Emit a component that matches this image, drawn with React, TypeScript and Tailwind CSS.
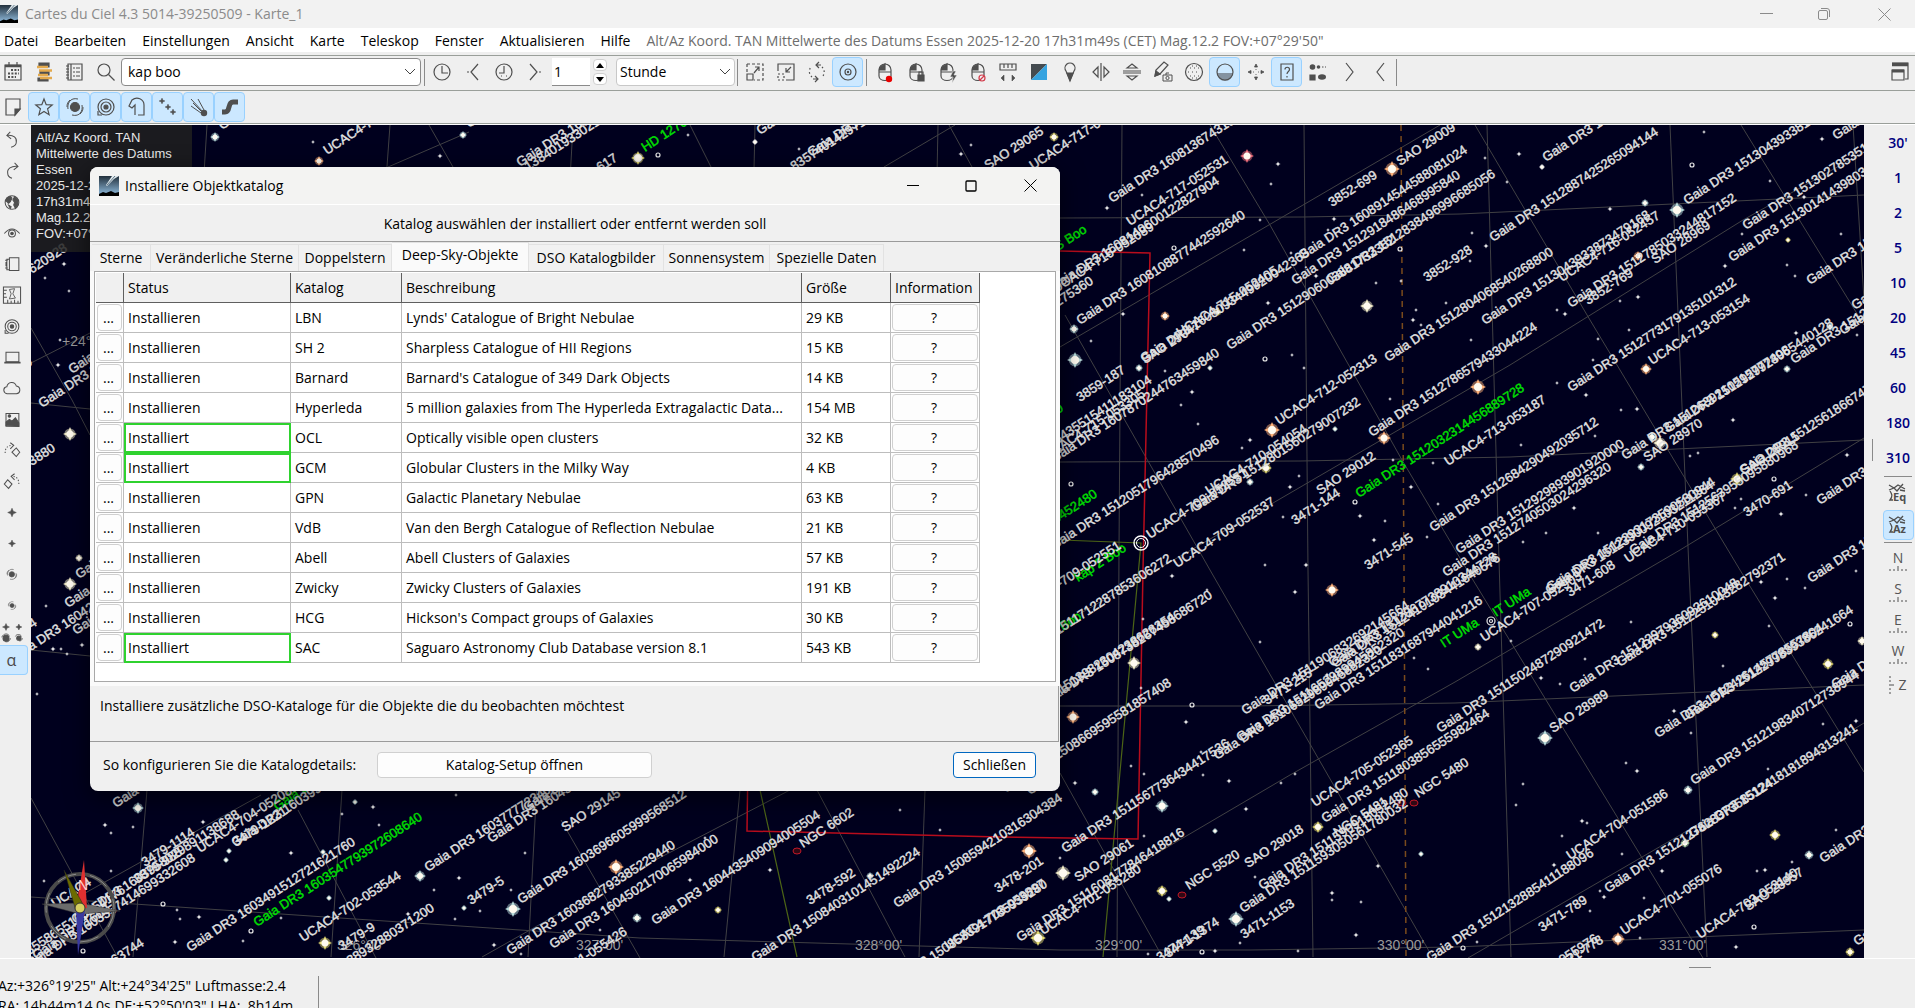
import type { ReactNode } from 'react';
import clsx from 'clsx';

type Point = [number, number];
type Label = [number, number, string];
type Star = [number, number, number, string];

const menus = ['Datei', 'Bearbeiten', 'Einstellungen', 'Ansicht', 'Karte', 'Teleskop', 'Fenster', 'Aktualisieren', 'Hilfe'];

const ink = '#4f4f4f';

function Icon({ children, size = 28 }: { children: ReactNode; size?: number }) {
    return (
        <svg width={size} height={size} viewBox="0 0 28 28" fill="none" stroke={ink} strokeWidth="1.2" aria-hidden="true">
            {children}
        </svg>
    );
}

const calendar = (
    <>
        <path d="M6 7h16v15H6z" />
        <path d="M6 8h16" strokeWidth="2.500" />
        <path d="M10 4v3M18 4v3" />
        <path d="M12 12h8M9 15.500h11M9 19h8" strokeWidth="2" strokeDasharray="2 1.400" />
    </>
);
const books = (
    <>
        <path d="M9 5h10v4H9zM10 13h9v4h-9zM8 20h10v3H8z" fill={ink} />
        <path d="M7 9h11M9 12.500h13M8 17h10M10 20h12" stroke="#e3a94c" strokeWidth="2.600" />
    </>
);
const listBook = (
    <>
        <path d="M7 6h14v16H7zM10 6v16" />
        <path d="M5 8h3M5 11h3M5 14h3M5 17h3M5 20h3M12 10h2M12 14h2M12 18h2M15 10h4M15 14h4M15 18h4" />
    </>
);
const magnifier = (
    <>
        <circle cx="12" cy="12" r="6" />
        <path d="M16.500 16.500l6 6" />
    </>
);
const clock = (
    <>
        <circle cx="14" cy="14" r="8" />
        <path d="M14 8v7h6" />
    </>
);
const clockBack = (
    <>
        <circle cx="14" cy="14" r="8" />
        <path d="M14 8v7H9M11 18h1M16 18h1" />
    </>
);
const stepBack = <path d="M19 6l-7 8 7 8M8 14h2" />;
const stepForward = <path d="M9 6l7 8-7 8M18 14h2" />;
const chevronRight = <path d="M11 5l7 9-7 9" />;
const chevronLeft = <path d="M18 5l-7 9 7 9" />;
const zoomOut = (
    <>
        <path d="M6 6h16v16h-9M6 6v8" strokeDasharray="3 2" />
        <path d="M6 16h6v6H6zM13 15l5-6M14 9h4v4" />
    </>
);
const zoomIn = (
    <>
        <path d="M6 13V6h16v16h-8" />
        <path d="M6 16h6v6H6z" strokeDasharray="2 2" />
        <path d="M19 9l-5 5M14 10v4h4" />
    </>
);
const rotateView = (
    <>
        <path d="M19 9a7 7 0 0 1 1 9M9 19a7 7 0 0 1-1-10" strokeDasharray="1.5 2.5" />
        <path d="M16 4l-3 3 3 3M12 18l3 3-3 3M13 7h5M10 21h5" />
    </>
);
const target = (
    <>
        <circle cx="14" cy="14" r="8" />
        <circle cx="14" cy="14" r="3" />
        <circle cx="14" cy="14" r=".6" />
    </>
);
const mouse = (
    <>
        <path d="M21 14v-2a6 6 0 0 0-12 0v6c0 6 12 6 12 0v-4H9" />
        <path d="M9.500 12V10l5.500-4v6z" fill={ink} />
    </>
);
const mouseDot = (<>{mouse}<circle cx="19" cy="21" r="3.2" fill="#e80000" stroke="none" /></>);
const mouseLock = (<>{mouse}<path d="M17 17h6v6h-6z" fill={ink} /><path d="M18 17v-3h4v3" /></>);
const mouseBolt = (<>{mouse}<path d="M21 13l-3 6h3l-1 6 5-8h-3l2-4z" fill={ink} stroke="#efefef" strokeWidth=".6" /></>);
const mouseOff = (<>{mouse}<circle cx="19" cy="20" r="3" stroke="#d23b4b" fill="#efefef" /><path d="M17 22l4-4" stroke="#d23b4b" /></>);
const ruler = (
    <>
        <path d="M6 6h16v6H6zM10 6v4M14 6v4M18 6v4" />
        <path d="M10 17l-3 3 3 3zM18 17l3 3-3 3z" fill={ink} strokeWidth=".6" />
    </>
);
const contrast = (
    <>
        <path d="M6 6h16L6 22z" fill="#444b50" stroke="none" />
        <path d="M22 6v16H6z" fill="#35a3e0" stroke="none" />
    </>
);
const pin = (
    <>
        <path d="M14 23l-4-10a5 5 0 1 1 8 0z" />
        <path d="M14 22l-3-7h6z" fill={ink} />
    </>
);
const flipH = <path d="M14 5v18M11 9l-5 5 5 5zM17 9l5 5-5 5z" />;
const flipV = <path d="M5 13h18M5 15h18M9 10l5-4 5 4zM9 18l5 4 5-4z" />;
const pencilCamera = (
    <>
        <path d="M6 18l1-6 8-8 4 3-8 9z" />
        <path d="M6 18l1-5 4 3z" fill={ink} />
        <path d="M14 17h9v6h-9zM17 17v-2h3" strokeWidth="1" />
        <circle cx="18.500" cy="20" r="1.600" strokeWidth="1" />
    </>
);
const dotted = (
    <>
        <circle cx="14" cy="14" r="8.5" />
        <path d="M10 10h9M8 14h12M10 18h9M12 8h5M12 20h5" strokeWidth="1" strokeDasharray="1 3" />
    </>
);
const horizon = (
    <>
        <path d="M6 15a8 8 0 0 0 16 0z" fill="#8492a0" stroke="none" />
        <circle cx="14" cy="14" r="8" />
    </>
);
const move = <path d="M14 6l1.500 3h-3zM14 22l1.500-3h-3zM6 14l3-1.500v3zM22 14l-3-1.500v3zM14 11v1M14 16v1M11 14h1M16 14h1" fill={ink} strokeWidth=".8" />;
const help = (
    <>
        <path d="M8 6h12v16H8z" />
        <path d="M12 11.500c0-3 4.500-3 4.500 0 0 2-2.500 2-2.500 4.500M14 18v1.500" />
    </>
);
const legend = (
    <>
        <circle cx="8.500" cy="9" r="2.800" fill={ink} stroke="none" />
        <circle cx="14.500" cy="9" r="1.800" fill={ink} stroke="none" />
        <path d="M18 9h1.500M21 9h1" />
        <path d="M6 17h5v5H6z" fill={ink} />
        <ellipse cx="18" cy="19" rx="4" ry="2.800" fill={ink} stroke="none" />
    </>
);
const windows = (
    <>
        <path d="M6 5h16v16h-3" />
        <path d="M6 6.500h16" strokeWidth="3.500" />
        <path d="M6 12h12v10H6z" />
        <path d="M6 13h12" strokeWidth="3" />
    </>
);
const note = (
    <>
        <path d="M7 6h14v10l-5 6H7z" />
        <path d="M16 22v-6h5z" fill={ink} />
    </>
);
const starIcon = <path d="M14 6l2.200 5.600 6 .4-4.600 3.800 1.500 5.900-5.100-3.200L8.900 21.700l1.500-5.900L5.800 12l6-.4z" />;
const galaxy = (
    <>
        <circle cx="14" cy="14" r="4.500" fill={ink} />
        <path d="M17 6C9 4 6 11 7 16M11 22c8 2 11-4 10-10M9 7c-3 3-3 5-3 7M19 21c3-3 3-5 3-7" strokeWidth="1" />
    </>
);
const rings = (
    <>
        <circle cx="14" cy="14" r="8" />
        <circle cx="14" cy="14" r="5" />
        <circle cx="14" cy="14" r="2" fill={ink} />
        <path d="M6 18v4h4" />
    </>
);
const nebula = <path d="M12 22V12l-3 3-3-2 3-6c5-4 12-1 12 5v10h-6" />;
const spark = (x: number, y: number, r: number) => (
    <path
        d={`M${x} ${y - r}l${r * 0.3} ${r * 0.7} ${r * 0.7} ${r * 0.3} ${-r * 0.7} ${r * 0.3} ${-r * 0.3} ${r * 0.7} ${-r * 0.3} ${-r * 0.7} ${-r * 0.7} ${-r * 0.3} ${r * 0.7} ${-r * 0.3}z`}
        fill={ink}
        strokeWidth=".6"
    />
);
const cluster = (<>{spark(8, 8, 2.8)}{spark(14, 14, 2.8)}{spark(19, 19, 2.8)}</>);
const comet = (
    <>
        <path d="M6 6l13 14M6 13l10 7M13 6l6 11M8 10l8 8" strokeWidth="1" />
        <circle cx="19" cy="20" r="3.200" fill={ink} stroke="none" />
    </>
);
const milkyWay = <path d="M6 19h3c6 0 2-10 8-10h5" strokeWidth="5" />;
const undo = <path d="M12 4L8 8l5 4M8 8c8-1 12 3 11 8 0 3-3 5-6 6" />;
const redo = <path d="M17 4l4 4-5 4M21 8C13 7 8 11 9 16c0 3 2 5 5 6" />;
const globe = (
    <>
        <circle cx="14" cy="14" r="8" />
        <path d="M8 9l4-2 2 2-2 4-2 2-3-3zM17 7l4 4v6l-3 4-2-4 1-3-2-3zM10 17l3 2-1 2z" fill={ink} />
    </>
);
const eye = (
    <>
        <path d="M5 14c6-7 12-7 18 0" />
        <circle cx="14" cy="14" r="4" />
        <circle cx="14" cy="14" r="1.500" fill={ink} />
    </>
);
const notebook = <path d="M11 6h11v15H11zM11 8H8v12h3M6 9h3M6 18h3M7 11v5" />;
const frame = (
    <>
        <path d="M4 4h20v19H4z" />
        <path d="M4 8h4M4 12h3M4 16h4M9 23v-4M13 23v-3M17 23v-4M21 23v-3" />
        <path d="M11 7l6-1-2 6 3 5-7 1 2-6z" strokeWidth="1" />
    </>
);
const laptop = (
    <>
        <path d="M7 8h15v11H7z" />
        <path d="M5 20h19" strokeWidth="2" />
    </>
);
const cloud = <path d="M9 20a4 4 0 0 1-1-8c1-6 9-7 11-1 6 1 5 9 0 9z" />;
const picture = (
    <>
        <path d="M7 7h15v15H7z" />
        <path d="M7 21v-4l4-3 3 2 4-4 4 6v4z" fill={ink} />
        <circle cx="11" cy="10" r="1.500" fill={ink} />
    </>
);
const rotateRight = (
    <>
        <path d="M14 16l5-5 4 5-4 5z" />
        <path d="M6 17c0-6 3-9 8-9" strokeDasharray="1.500 2" />
        <path d="M12 5l4 3-4 4" />
    </>
);
const rotateLeft = (
    <>
        <path d="M5 17l4-5 5 5-4 5z" />
        <path d="M22 17c0-6-3-9-7-9" strokeDasharray="1.500 2" />
        <path d="M17 5l-4 3 4 4" />
    </>
);
const smallGalaxy = (
    <g transform="translate(4 4) scale(.7)">{galaxy}</g>
);
const tinyGalaxy = (
    <g transform="translate(6.500 6.500) scale(.54)">{galaxy}</g>
);
const fewerMore = (
    <>
        {spark(7, 7, 4)}
        {spark(22, 7, 3.5)}
        <circle cx="7" cy="20" r="3.500" fill={ink} />
        <circle cx="22" cy="20" r="2.500" fill={ink} />
        <path d="M2 19c2-5 8-5 9-1M18 18c1-3 6-3 7 0M12 20c0 3-3 5-6 4M26 20c0 2-2 4-4 3" strokeWidth="1" />
    </>
);

type Tool = { label: string; icon: ReactNode; on?: boolean };

const mapTools: Tool[] = [
    { label: 'Maus Punkt', icon: mouseDot },
    { label: 'Maus sperren', icon: mouseLock },
    { label: 'Maus Blitz', icon: mouseBolt },
    { label: 'Maus aus', icon: mouseOff },
    { label: 'Abstand messen', icon: ruler },
    { label: 'Farben', icon: contrast },
    { label: 'Beschriftung', icon: pin },
    { label: 'Horizontal spiegeln', icon: flipH },
    { label: 'Vertikal spiegeln', icon: flipV },
    { label: 'Bild bearbeiten', icon: pencilCamera },
    { label: 'Gitter', icon: dotted },
    { label: 'Horizont', icon: horizon, on: true },
    { label: 'Verschieben', icon: move },
    { label: 'Hilfe', icon: help, on: true },
    { label: 'Legende', icon: legend },
    { label: 'Weiter', icon: chevronRight },
    { label: 'Zurück', icon: chevronLeft },
];

const objectTools: Tool[] = [
    { label: 'Sterne', icon: starIcon },
    { label: 'Nebel', icon: galaxy },
    { label: 'Planeten', icon: rings },
    { label: 'Dunkelnebel', icon: nebula },
    { label: 'Asteroiden', icon: cluster },
    { label: 'Kometen', icon: comet },
    { label: 'Milchstraße', icon: milkyWay },
];

const sideTools: Tool[] = [
    { label: 'Rückgängig', icon: undo },
    { label: 'Wiederholen', icon: redo },
    { label: 'Beobachtungsort', icon: globe },
    { label: 'Sichtfeld', icon: eye },
    { label: 'Katalog', icon: notebook },
    { label: 'Kartenrahmen', icon: frame },
    { label: 'Sonnensystem', icon: rings },
    { label: 'Anzeige', icon: laptop },
    { label: 'Wolken', icon: cloud },
    { label: 'Bilder', icon: picture },
    { label: 'Rechts drehen', icon: rotateRight },
    { label: 'Links drehen', icon: rotateLeft },
    { label: 'Mehr Sterne', icon: spark(14, 14, 5) },
    { label: 'Weniger Sterne', icon: spark(14, 14, 4) },
    { label: 'Mehr Nebel', icon: smallGalaxy },
    { label: 'Weniger Nebel', icon: tinyGalaxy },
];

function ToolButton({ label, icon, on }: Tool) {
    return (
        <button
            type="button"
            aria-label={label}
            className={clsx(
                'flex h-[30px] w-[31px] shrink-0 items-center justify-center rounded-sm border',
                on ? 'border-[#99d1ff] bg-[#cce8ff]' : 'border-transparent',
            )}
        >
            <Icon>{icon}</Icon>
        </button>
    );
}

function Separator() {
    return <div className="mx-px h-[27px] w-px shrink-0 bg-[#8a8a8a]" />;
}

function AppLogo({ className }: { className: string }) {
    return (
        <svg className={className} viewBox="0 0 20 20" aria-hidden="true">
            <defs>
                <linearGradient id="dusk" x1="0" y1="0" x2="0" y2="1">
                    <stop offset="0" stopColor="#22303c" />
                    <stop offset=".8" stopColor="#7fa6c4" />
                </linearGradient>
            </defs>
            <rect width="20" height="20" fill="url(#dusk)" />
            <path d="M7 9l6-9h7l-5 3-7 7z" fill="#dfe8ec" />
            <path d="M8 9l8-9" stroke="#5f7686" />
            <path d="M0 18l4-2 3 1 5-2 4 2 4-1v4H0z" fill="#000" />
        </svg>
    );
}

function Chevron({ className }: { className?: string }) {
    return (
        <svg className={className} width="12" height="12" viewBox="0 0 12 12" fill="none" stroke="#444" aria-hidden="true">
            <path d="M1 3l5 5 5-5" />
        </svg>
    );
}

/* Star chart: all points are in window pixels, shifted to the chart's corner when drawn */

const grid: Point[][] = [
    [[207, 125], [190, 400], [147, 790], [133, 957]],
    [[390, 125], [342, 790], [331, 957]],
    [[573, 125], [535, 820], [528, 957]],
    [[755, 125], [740, 790], [724, 957]],
    [[938, 125], [925, 790], [919, 957]],
    [[1122, 125], [1119, 550], [1117, 957]],
    [[1304, 125], [1308, 570], [1313, 957]],
    [[1487, 125], [1499, 560], [1511, 957]],
    [[1670, 125], [1689, 570], [1707, 957]],
    [[1853, 125], [1864, 300]],
    [[1060, 218], [1304, 217], [1460, 214], [1864, 195]],
    [[1060, 462], [1300, 461], [1510, 457], [1864, 440]],
    [[1060, 706], [1250, 706], [1455, 703], [1864, 685]],
    [[31, 897], [340, 918], [640, 938], [1060, 950], [1250, 950], [1455, 947], [1864, 930]],
    [[31, 403], [90, 409]],
    [[31, 650], [90, 656]],
    [[31, 363], [90, 333]],
    [[1060, 347], [1440, 125]],
    [[1060, 625], [1273, 503], [1510, 365], [1743, 220], [1864, 152]],
    [[1103, 885], [1290, 775], [1455, 682], [1680, 550], [1864, 438]],
    [[1468, 958], [1680, 835], [1864, 723]],
    [[388, 167], [469, 132]],
    [[884, 167], [955, 125]],
    [[78, 897], [261, 795]],
    [[482, 957], [640, 868], [790, 790]],
    [[1210, 125], [1270, 225], [1402, 460], [1473, 580], [1703, 958]],
    [[1475, 125], [1590, 320], [1740, 570], [1864, 772]],
    [[1741, 125], [1864, 325]],
    [[1065, 315], [1210, 570], [1433, 958]],
    [[1060, 773], [1163, 958]],
    [[429, 125], [453, 167]],
    [[690, 125], [711, 167]],
    [[949, 125], [972, 167]],
    [[31, 798], [118, 958]],
    [[298, 810], [376, 958]],
    [[561, 820], [640, 958]],
    [[31, 328], [72, 400], [90, 435]],
    [[817, 790], [905, 957]],
];

const labels: Label[] = [
    [1112, 203, 'Gaia DR3 1608136743107461248'],
    [1130, 226, 'UCAC4-717-052531'],
    [1054, 291, 'Gaia DR3 1608140600122827904'],
    [1056, 293, 'UCAC4-716-052089'],
    [1080, 325, 'Gaia DR3 1608108877442592640'],
    [1180, 337, 'UCAC4-715-052405'],
    [1144, 363, 'Gaia DR3 1608093449920042368'],
    [1145, 364, 'SAO 29047'],
    [1302, 260, 'Gaia DR3 1608914544588081024'],
    [1295, 285, 'Gaia DR3 1512918486468995840'],
    [1330, 284, 'Gaia DR3 1512838496996685056'],
    [1230, 350, 'Gaia DR3 1512906003881732352'],
    [1332, 207, '3852-699'],
    [1400, 166, 'SAO 29009'],
    [1427, 282, '3852-928'],
    [1388, 362, 'Gaia DR3 1512804068540268800'],
    [1372, 437, 'Gaia DR3 1512786579433044224'],
    [1448, 466, 'UCAC4-713-053187'],
    [1279, 425, 'UCAC4-712-052313'],
    [1080, 402, '3859-187'],
    [1054, 463, 'Gaia DR3 1607870244763459840'],
    [988, 489, 'Gaia DR3 1608435515411183104'],
    [1047, 460, 'UCAC4-715-053305'],
    [928, 391, 'Gaia DR3 1608243516541275360'],
    [1054, 550, 'Gaia DR3 1512051796428570496'],
    [1195, 512, 'Gaia DR3 1512801560279007232'],
    [1209, 495, 'UCAC4-710-054054'],
    [1150, 539, 'UCAC4-709-052551'],
    [1177, 568, 'UCAC4-709-052537'],
    [1320, 495, 'SAO 29012'],
    [1295, 525, '3471-144'],
    [1368, 570, '3471-545'],
    [1433, 532, 'Gaia DR3 1512684290492035712'],
    [1459, 554, 'Gaia DR3 1512929893901920000'],
    [1446, 577, 'Gaia DR3 1512740503024296320'],
    [1332, 667, 'Gaia DR3 1512867738910344728'],
    [1023, 612, 'UCAC4-709-052551'],
    [1007, 668, 'Gaia DR3 1511712287853606272'],
    [1006, 793, 'Gaia DR3 1508669595581857408'],
    [1047, 705, 'Gaia DR3 1508738267458686720'],
    [1010, 727, 'Gaia DR3 1513982304238626354'],
    [1065, 853, 'Gaia DR3 1511567736434417536'],
    [1217, 760, 'Gaia DR3 1510652989945852320'],
    [1240, 742, 'Gaia DR3 1511652989945852320'],
    [1245, 715, 'Gaia DR3 1511906832692145664'],
    [1267, 705, '3471-215'],
    [1318, 710, 'Gaia DR3 1511831687944041216'],
    [1335, 668, 'Gaia DR3 1512419103441640576'],
    [1315, 807, 'UCAC4-705-052365'],
    [1325, 823, 'Gaia DR3 1511803856555982464'],
    [1418, 798, 'NGC 5480'],
    [1337, 837, 'NGC 5481'],
    [1262, 890, 'Gaia DR3 1511590918052480'],
    [1243, 913, 'Gaia DR3 1511593050561780032'],
    [1248, 868, 'SAO 29018'],
    [1189, 890, 'NGC 5520'],
    [1244, 939, '3471-1153'],
    [1168, 958, '3471-1374'],
    [1160, 962, '3474-139'],
    [1078, 882, 'SAO 29061'],
    [1020, 942, 'Gaia DR3 1511608177846418816'],
    [1043, 935, 'UCAC4-701-055280'],
    [998, 893, '3478-201'],
    [897, 908, 'Gaia DR3 1508594210316304384'],
    [948, 950, 'UCAC4-703-053897'],
    [882, 994, 'Gaia DR3 1508583917785939280'],
    [1484, 642, 'UCAC4-707-052903'],
    [1570, 597, '3471-608'],
    [1549, 595, 'Gaia DR3 1512390092103211264'],
    [1440, 733, 'Gaia DR3 1511502487290921472'],
    [1573, 693, 'Gaia DR3 1512297936092610048'],
    [1620, 667, 'Gaia DR3 1512251043282792371'],
    [1553, 733, 'SAO 28989'],
    [1658, 738, 'Gaia DR3 1512426145778557804'],
    [1688, 720, 'Gaia DR3 1512299839386241664'],
    [1694, 785, 'Gaia DR3 1512198340712738944'],
    [1608, 893, 'Gaia DR3 1512127628373585124'],
    [1692, 838, 'Gaia DR3 1512418181894313241'],
    [1570, 860, 'UCAC4-704-051586'],
    [1430, 962, 'Gaia DR3 1512132885411188096'],
    [1542, 932, '3471-789'],
    [1624, 935, 'UCAC4-701-055076'],
    [1700, 939, 'UCAC4-703-053140'],
    [1748, 911, 'SAO 28957'],
    [1500, 1005, 'UCAC4-701-055976'],
    [1558, 972, '3471-778'],
    [1823, 863, 'Gaia DR3 15121'],
    [1857, 946, 'Gaia DR3'],
    [1811, 583, 'Gaia DR3 1512'],
    [1835, 689, 'Gaia DR3 1512'],
    [1546, 162, 'Gaia DR3 1512901638274'],
    [1493, 242, 'Gaia DR3 1512887425265094144'],
    [1687, 205, 'Gaia DR3 1513043933814267136'],
    [1746, 230, 'Gaia DR3 1513027853515120640'],
    [1732, 262, 'Gaia DR3 1513014143980317184'],
    [1810, 285, 'Gaia DR3 1512'],
    [1836, 140, 'Gaia DR3 1512'],
    [1855, 310, 'Gaia DR3'],
    [1820, 505, 'Gaia DR3 1512'],
    [1794, 364, 'Gaia DR3 151241'],
    [1843, 335, 'Gaia DR3 151'],
    [1562, 282, 'UCAC4-716-052457'],
    [1485, 325, 'Gaia DR3 1513043933873479168'],
    [1571, 308, 'Gaia DR3 1512785033244817152'],
    [1588, 305, '3852-769'],
    [1655, 264, 'SAO 28969'],
    [1571, 392, 'Gaia DR3 1512773179135101312'],
    [1652, 365, 'UCAC4-713-053154'],
    [1625, 460, 'Gaia DR3 1512639210515777408'],
    [1668, 433, 'Gaia DR3 1512929923965440128'],
    [1647, 462, 'SAO 28970'],
    [1743, 475, 'Gaia DR3 1512561866747'],
    [1744, 475, 'SAO 28915'],
    [1633, 555, 'Gaia DR3 1512563955095880968'],
    [1628, 563, 'UCAC4-710-053367'],
    [1550, 592, 'Gaia DR3 1512293173590530944'],
    [1747, 517, '3470-691'],
    [327, 155, 'UCAC4-717-052'],
    [222, 130, 'Gaia DR3'],
    [760, 135, 'Gaia DR3 16'],
    [811, 157, 'Gaia DR3 161429716'],
    [794, 171, '835740142971'],
    [988, 170, 'SAO 29065'],
    [1033, 170, 'UCAC4-717-052531'],
    [520, 167, 'Gaia DR3 16100'],
    [528, 171, '1384019330217'],
    [469, 128, 'Gaia'],
    [600, 172, '617'],
    [-98, 358, 'Gaia DR3 1604233958725620928'],
    [72, 374, 'Gaia DR3 160'],
    [42, 408, 'Gaia DR3 160'],
    [-133, 472, 'Gaia DR3 1604233958725620920'],
    [-110, 558, 'Gaia DR3 1604233958725653880'],
    [79, 579, 'Gaia'],
    [-70, 662, 'UCAC4-706-052517'],
    [68, 608, 'Gaia'],
    [-61, 689, 'UCAC4-706-054064'],
    [14, 662, 'Gaia DR3 16042'],
    [76, 635, 'Gaia'],
    [116, 808, 'Gaia DR3'],
    [190, 952, 'Gaia DR3 1603491512721621760'],
    [303, 942, 'UCAC4-702-053544'],
    [269, 1018, 'Gaia DR3 1603488932880371200'],
    [342, 951, '3479-9'],
    [471, 905, '3479-5'],
    [428, 872, 'Gaia DR3 1603777723401'],
    [491, 843, 'Gaia DR3 16045'],
    [527, 812, 'Gaia DR3'],
    [565, 832, 'SAO 29145'],
    [521, 904, 'Gaia DR3 1603696605999568512'],
    [510, 955, 'Gaia DR3 1603682793385229440'],
    [553, 949, 'Gaia DR3 1604502170065984000'],
    [529, 998, 'UCAC4-701-055426'],
    [145, 867, '3479-1114'],
    [200, 853, 'UCAC4-704-052089'],
    [235, 847, 'Gaia DR3 1603995402'],
    [236, 847, '3479-1221'],
    [75, 924, 'Gaia DR3 1603958029891138688'],
    [137, 884, '3879-988'],
    [30, 968, 'Gaia DR3 1603557414699332608'],
    [-40, 1000, 'Gaia DR3 1603558655160354176'],
    [36, 960, 'Gaia DR3 1603'],
    [-3, 1041, 'Gaia DR3 1603481920063744'],
    [55, 908, 'UCAC4'],
    [655, 925, 'Gaia DR3 1604435409094005504'],
    [810, 905, '3478-592'],
    [755, 962, 'Gaia DR3 1508403101451492224'],
    [803, 848, 'NGC 6602'],
    [1030, 795, 'Gaia'],
];

const greenLabels: Label[] = [
    [1359, 498, 'Gaia DR3 1512032314456889728'],
    [1078, 582, 'kap 2 Boo'],
    [1063, 631, 'Boo'],
    [1496, 617, 'IT UMa'],
    [1444, 648, 'IT UMa'],
    [1050, 256, 'CS Boo'],
    [932, 604, 'Gaia DR3 1512066183945452480'],
    [1052, 418, '20'],
    [645, 152, 'HD 12702'],
    [257, 927, 'Gaia DR3 1603547793972608640'],
    [277, 811, 'Gaia DR3'],
];

const axisLabels: Label[] = [
    [62, 346, '+24°'],
    [337, 950, "326°00'"],
    [576, 950, "327°00'"],
    [855, 950, "328°00'"],
    [1095, 950, "329°00'"],
    [1377, 950, "330°00'"],
    [1659, 950, "331°00'"],
];

const orange = '#ffb27a';
const teal = '#b9dcdc';
const cream = '#f2ecc8';
const yellow = '#e6dc74';

const stars: Star[] = [
    [1247, 156, 7, '#f0707c'], [1392, 169, 8, orange], [1367, 306, 7, cream], [1478, 387, 8, orange], [1384, 438, 7, orange],
    [1272, 430, 8, orange], [1266, 468, 6, yellow], [1165, 316, 5, orange], [1075, 360, 8, teal], [1074, 329, 5, teal],
    [1139, 368, 4, teal], [1250, 482, 4, teal], [1218, 312, 4, yellow], [1210, 368, 3, teal], [1335, 429, 3, teal],
    [1677, 210, 8, teal], [1645, 203, 4, teal], [1638, 256, 5, orange], [1646, 369, 6, orange], [1660, 443, 7, cream],
    [1652, 437, 5, teal], [1641, 467, 4, teal], [1737, 479, 7, yellow], [1787, 369, 4, teal], [1788, 240, 3, yellow],
    [1542, 167, 3, '#ffffff'], [1830, 327, 4, teal], [1332, 590, 7, orange], [1134, 663, 7, cream], [1073, 717, 7, orange],
    [1162, 806, 7, teal], [1095, 792, 4, teal], [1318, 827, 6, yellow], [1029, 851, 8, orange], [1063, 873, 8, cream],
    [1162, 891, 6, yellow], [1038, 938, 8, yellow], [1236, 919, 8, teal], [1169, 899, 3, teal], [1215, 831, 3, teal],
    [1545, 738, 8, teal], [1478, 647, 4, cream], [1715, 635, 4, yellow], [1828, 664, 6, yellow], [1688, 790, 5, teal],
    [1685, 843, 5, '#b8e0b0'], [1775, 835, 6, yellow], [1809, 855, 5, teal], [1618, 939, 7, orange], [1850, 952, 5, yellow],
    [1862, 641, 5, cream], [70, 434, 7, cream], [70, 584, 7, cream], [79, 558, 4, cream], [138, 808, 6, teal],
    [420, 876, 6, teal], [513, 909, 8, teal], [616, 867, 8, orange], [325, 943, 7, yellow], [637, 918, 5, teal],
    [229, 851, 3, teal], [226, 860, 3, teal], [323, 852, 3, teal], [329, 898, 3, teal], [464, 908, 3, teal],
    [215, 137, 5, teal], [319, 161, 5, orange], [463, 135, 4, teal], [638, 158, 7, yellow], [1054, 137, 5, yellow],
    [755, 142, 3, '#ffffff'], [355, 802, 3, teal], [1421, 854, 3, teal], [718, 910, 4, yellow], [870, 876, 4, teal],
];

const dots: Point[] = [
    [1278, 164], [1271, 184], [1142, 195], [1107, 208], [1260, 220], [1244, 250], [1334, 219], [1328, 230], [1291, 253], [1316, 276],
    [1376, 283], [1401, 281], [1268, 303], [1292, 355], [1304, 368], [1123, 314], [1091, 341], [1165, 371], [1192, 392], [1181, 405],
    [1198, 424], [1250, 440], [1242, 448], [1299, 476], [1290, 487], [1390, 399], [1393, 460], [1411, 487], [1433, 463], [1438, 504],
    [1360, 516], [1385, 521], [1283, 517], [1374, 540], [1427, 537], [1265, 565], [1306, 565], [1472, 233], [1470, 261], [1486, 246],
    [1446, 303], [1416, 310], [1413, 320], [1421, 325], [1471, 340], [1519, 154], [1485, 158], [1507, 182], [1610, 209], [1704, 132],
    [1770, 181], [1804, 197], [1841, 234], [1742, 234], [1725, 266], [1787, 265], [1795, 276], [1796, 333], [1857, 335], [1557, 310],
    [1565, 314], [1598, 339], [1629, 330], [1638, 297], [1620, 301], [1557, 383], [1586, 395], [1593, 360], [1621, 410], [1637, 409],
    [1521, 445], [1595, 436], [1733, 420], [1698, 453], [1690, 456], [1847, 455], [1741, 499], [1735, 508], [1781, 514], [1806, 495],
    [1598, 533], [1574, 508], [1523, 542], [1546, 533], [1295, 592], [1207, 590], [1260, 642], [1172, 576], [1143, 619],
    [1141, 688], [1186, 722], [1201, 752], [1203, 775], [1229, 781], [1281, 783], [1295, 774], [1246, 809], [1144, 774], [1131, 766],
    [1075, 783], [1144, 836], [1060, 858], [1332, 893], [1332, 900], [1361, 902], [1356, 935], [1240, 943], [1148, 954], [1215, 951],
    [1298, 951], [1255, 877], [1378, 866], [1414, 658], [1428, 669], [1327, 675], [1585, 659], [1560, 684], [1541, 678], [1511, 641],
    [1631, 622], [1761, 582], [1787, 579], [1805, 588], [1775, 598], [1769, 626], [1723, 666], [1674, 711], [1691, 733], [1823, 724],
    [1856, 721], [1768, 769], [1626, 763], [1637, 771], [1523, 784], [1516, 805], [1582, 821], [1587, 823], [1562, 836], [1554, 865],
    [1622, 854], [1600, 891], [1604, 897], [1590, 911], [1644, 898], [1662, 871], [1640, 938], [1757, 871], [1765, 870], [1792, 862],
    [1836, 830], [1736, 947], [1477, 942], [45, 278], [64, 264], [69, 291], [60, 340], [58, 365], [37, 694],
    [313, 142], [440, 156], [688, 135], [799, 149], [961, 154], [971, 145], [1074, 133], [105, 825], [111, 833], [133, 827],
    [203, 822], [111, 871], [44, 881], [291, 853], [379, 825], [342, 814], [373, 807], [456, 795], [434, 890], [459, 878],
    [511, 890], [525, 853], [408, 914], [455, 919], [480, 911], [199, 917], [180, 919], [177, 910], [175, 942], [243, 941],
    [281, 918], [494, 945], [521, 954], [560, 872], [690, 880], [705, 838], [600, 930], [770, 870], [940, 830], [900, 810],
    [53, 649], [61, 649], [67, 654], [82, 645], [46, 606], [1856, 571], [1822, 139],
];

const doubles: Point[] = [
    [1174, 248], [1265, 359], [1400, 249], [1692, 165], [1355, 502], [1071, 484], [1774, 479], [1192, 705], [1202, 952], [1850, 624],
    [1754, 927], [1463, 948], [163, 904], [251, 931], [83, 951], [658, 155],
];

const galaxies: Point[] = [[1182, 895], [1402, 803], [1414, 803], [797, 851]];

function toPath(points: Point[]) {
    return points.map(([x, y], i) => `${i ? 'L' : 'M'}${x} ${y}`).join('');
}

function starPath(x: number, y: number, r: number) {
    const k = r * 0.3;
    return `M${x} ${y - r}L${x + k} ${y - k}L${x + r} ${y}L${x + k} ${y + k}L${x} ${y + r}L${x - k} ${y + k}L${x - r} ${y}L${x - k} ${y - k}Z`;
}

function Labels({ items, fill }: { items: Label[]; fill: string }) {
    return (
        <g fill={fill} stroke={fill} strokeWidth=".4">
            {items.map(([x, y, text], i) => (
                <text key={i} transform={`translate(${x} ${y}) rotate(-33)`}>{text}</text>
            ))}
        </g>
    );
}

function Compass() {
    return (
        <g transform="translate(80 908)">
            <circle r="34" fill="none" stroke="#4a4a4a" strokeWidth="4" />
            <circle r="34" fill="none" stroke="#8c8c8c" strokeWidth="1" strokeDasharray="20 14" />
            <path d="M-38 -4L0 -5L40 3L0 6z" fill="#6c6c6c" stroke="#333" strokeWidth=".5" />
            <path d="M4 -48L7 0H-4z" fill="#e03030" />
            <path d="M-2 47L5 2H-4z" fill="#3a3aa0" />
            <path d="M-16 -38L4 -2L-4 3z" fill="#6b6b00" stroke="#222" strokeWidth=".5" />
            <circle r="5" fill="#d6cf60" stroke="#333" />
            <text x="-2" y="-18" fontSize="14" fill="#ffd0d0">N</text>
        </g>
    );
}

function StarChart() {
    return (
        <svg className="absolute inset-0 h-full w-full font-['Liberation_Sans',sans-serif] text-[13px]" role="img" aria-label="Sternkarte">
            <g transform="translate(-31 -125)">
                <g fill="none" stroke="#404044">
                    {grid.map((line, i) => (
                        <path key={i} d={toPath(line)} />
                    ))}
                </g>
                <path d="M1401 125L1404 570L1406 957" fill="none" stroke="#7a4a1c" strokeWidth="1.5" strokeDasharray="6 5" />
                <path d="M1000 537L1060 540L1141 543L1103 957M760 790L797 957" fill="none" stroke="#4c6416" strokeWidth="1.2" />
                <path d="M1000 250L1060 251L1150 253L1143 570L1138 839L1000 837L747 831L748 760" fill="none" stroke="#b80c1c" strokeWidth="1.5" />
                <g fill="#f4f4f4">
                    {dots.map(([x, y], i) => (
                        <path key={i} d={starPath(x, y, i % 3 ? 2 : 2.6)} />
                    ))}
                </g>
                {stars.map(([x, y, r, color], i) => (
                    <g key={i}>
                        <circle cx={x} cy={y} r={r * 0.8} fill={color} opacity=".5" />
                        <path d={starPath(x, y, r)} fill={color} />
                        <circle cx={x} cy={y} r={r * 0.5} fill="#fffaf0" />
                    </g>
                ))}
                <g fill="none" stroke="#e8e8e8" strokeWidth="1.2">
                    {doubles.map(([x, y], i) => (
                        <circle key={i} cx={x} cy={y} r="2" />
                    ))}
                    <circle cx="638" cy="158" r="3.5" />
                    <circle cx="1491" cy="621" r="4" />
                    <circle cx="1491" cy="621" r="1.5" />
                </g>
                <g fill="#300814" stroke="#c01828">
                    {galaxies.map(([x, y], i) => (
                        <ellipse key={i} cx={x} cy={y} rx="4" ry="3" />
                    ))}
                </g>
                <g fill="#9a9a9a" fontSize="14">
                    {axisLabels.map(([x, y, text]) => (
                        <text key={text} x={x} y={y}>{text}</text>
                    ))}
                </g>
                <Labels items={greenLabels} fill="#00e000" />
                <Labels items={labels} fill="#e2e2e2" />
                <circle cx="1141" cy="543" r="7" fill="none" stroke="#fff" strokeWidth="1.400" />
                <circle cx="1141" cy="543" r="4.500" fill="none" stroke="#fff" />
                <Compass />
            </g>
        </svg>
    );
}

const tabs = [
    { label: 'Sterne', width: 'w-[59px]' },
    { label: 'Veränderliche Sterne', width: 'w-[148px]' },
    { label: 'Doppelstern', width: 'w-[93px]' },
    { label: 'Deep-Sky-Objekte', width: 'w-[137px]' },
    { label: 'DSO Katalogbilder', width: 'w-[135px]' },
    { label: 'Sonnensystem', width: 'w-[106px]' },
    { label: 'Spezielle Daten', width: 'w-[114px]' },
];

const catalogs = [
    { name: 'LBN', text: "Lynds' Catalogue of Bright Nebulae", size: '29 KB' },
    { name: 'SH 2', text: 'Sharpless Catalogue of HII Regions', size: '15 KB' },
    { name: 'Barnard', text: "Barnard's Catalogue of 349 Dark Objects", size: '14 KB' },
    { name: 'Hyperleda', text: '5 million galaxies from The Hyperleda Extragalactic Data...', size: '154 MB' },
    { name: 'OCL', text: 'Optically visible open clusters', size: '32 KB', installed: true },
    { name: 'GCM', text: 'Globular Clusters in the Milky Way', size: '4 KB', installed: true },
    { name: 'GPN', text: 'Galactic Planetary Nebulae', size: '63 KB' },
    { name: 'VdB', text: 'Van den Bergh Catalogue of Reflection Nebulae', size: '21 KB' },
    { name: 'Abell', text: 'Abell Clusters of Galaxies', size: '57 KB' },
    { name: 'Zwicky', text: 'Zwicky Clusters of Galaxies', size: '191 KB' },
    { name: 'HCG', text: "Hickson's Compact groups of Galaxies", size: '30 KB' },
    { name: 'SAC', text: 'Saguaro Astronomy Club Database version 8.1', size: '543 KB', installed: true },
];

function CatalogTable() {
    const head = 'border-r border-b border-[#5f5f5f] bg-[#f0f0f0] px-1 text-left font-normal';
    const cell = 'border-r border-b border-[#bdbdbd] px-1 whitespace-nowrap';
    return (
        <table className="w-[884px] table-fixed border-separate border-spacing-0">
            <colgroup>
                <col className="w-7" />
                <col className="w-[167px]" />
                <col className="w-[111px]" />
                <col className="w-[400px]" />
                <col className="w-[89px]" />
                <col className="w-[89px]" />
            </colgroup>
            <thead>
                <tr className="h-[30px]">
                    <th className={head} aria-label="Details" />
                    <th className={head}>Status</th>
                    <th className={head}>Katalog</th>
                    <th className={head}>Beschreibung</th>
                    <th className={head}>Größe</th>
                    <th className={head}>Information</th>
                </tr>
            </thead>
            <tbody>
                {catalogs.map((row) => (
                    <tr key={row.name} className="h-[30px]">
                        <td className="border-r border-b border-[#bdbdbd] p-px">
                            <button type="button" className="block h-[27px] w-[25px] rounded border border-[#d0d0d0] bg-[#fdfdfd] pr-0.5 text-center">
                                ...
                            </button>
                        </td>
                        <td
                            className={clsx(
                                'whitespace-nowrap',
                                row.installed
                                    ? 'border-2 border-[#2fd22f] pl-0.5'
                                    : 'border-r border-b border-[#bdbdbd] px-1',
                            )}
                        >
                            {row.installed ? 'Installiert' : 'Installieren'}
                        </td>
                        <td className={cell}>{row.name}</td>
                        <td className={cell}>{row.text}</td>
                        <td className={cell}>{row.size}</td>
                        <td className="border-r border-b border-[#bdbdbd] p-px">
                            <button type="button" className="block h-[27px] w-[86px] rounded border border-[#d0d0d0] bg-[#fdfdfd] pr-0.5 text-center">
                                ?
                            </button>
                        </td>
                    </tr>
                ))}
            </tbody>
        </table>
    );
}

function CatalogDialog() {
    return (
        <section
            role="dialog"
            aria-label="Installiere Objektkatalog"
            className="absolute top-[42px] left-[59px] flex w-[970px] flex-col overflow-hidden rounded-lg bg-[#f0f0f0] shadow-[0_6px_24px_rgba(0,0,0,0.6)]"
        >
            <header className="flex h-[38px] items-center border-b border-white bg-[#f3f3f2] pl-[9px]">
                <AppLogo className="h-5 w-5" />
                <h2 className="ml-1.5 flex-1">Installiere Objektkatalog</h2>
                <button type="button" aria-label="Minimieren" className="flex h-9 w-[58px] items-center justify-center">
                    <svg width="12" height="12" viewBox="0 0 12 12" stroke="#000"><path d="M0 5.500h12" /></svg>
                </button>
                <button type="button" aria-label="Maximieren" className="flex h-9 w-[58px] items-center justify-center">
                    <svg width="12" height="12" viewBox="0 0 12 12" fill="none" stroke="#000" strokeWidth="1.300"><rect x="1" y="1" width="10" height="10" rx="1" /></svg>
                </button>
                <button type="button" aria-label="Schließen" className="flex h-9 w-[60px] items-center justify-center">
                    <svg width="13" height="13" viewBox="0 0 13 13" stroke="#000"><path d="M.5.5l12 12M12.500.5l-12 12" /></svg>
                </button>
            </header>

            <p className="flex h-[37px] items-center justify-center border-b border-[#9b9b9b] pt-px">
                Katalog auswählen der installiert oder entfernt werden soll
            </p>

            <div className="flex h-[29px] items-end px-0.5" role="tablist">
                {tabs.map((tab) => {
                    const active = tab.label === 'Deep-Sky-Objekte';
                    return (
                        <button
                            key={tab.label}
                            type="button"
                            role="tab"
                            aria-selected={active}
                            className={clsx(
                                'shrink-0 border-t border-r border-[#e2e2e2] text-center whitespace-nowrap',
                                active ? 'h-[29px] bg-[#fafafa] pb-1' : 'h-[27px] bg-[#f1f1f1]',
                                tab.width,
                            )}
                        >
                            {tab.label}
                        </button>
                    );
                })}
            </div>

            <div className="bg-[#fafafa] px-1 pb-1">
                <div className="h-[411px] border border-[#a8a8a8] bg-white p-px">
                    <CatalogTable />
                </div>
            </div>

            <p className="mr-px h-[56px] border-r border-b border-[#9b9b9b] pt-2.5 pl-2.5">
                Installiere zusätzliche DSO-Kataloge für die Objekte die du beobachten möchtest
            </p>

            <footer className="flex h-[49px] items-center pr-6 pb-1 pl-[13px]">
                <span className="w-[274px]">So konfigurieren Sie die Katalogdetails:</span>
                <button type="button" className="h-[26px] w-[275px] rounded border border-[#d0d0d0] bg-[#fdfdfd]">
                    Katalog-Setup öffnen
                </button>
                <button type="button" className="ml-auto h-[26px] w-[83px] rounded border border-[#0067c0] bg-[#fdfdfd]">
                    Schließen
                </button>
            </footer>
        </section>
    );
}

const fieldSizes = ["30'", '1', '2', '5', '10', '20', '45', '60', '180', '310'];

function GridButton({ text, on }: { text: string; on?: boolean }) {
    return (
        <button
            type="button"
            className={clsx(
                'flex h-[30px] w-[31px] items-center justify-center rounded-sm border',
                on ? 'border-[#99d1ff] bg-[#cce8ff]' : 'border-transparent',
            )}
        >
            <svg width="22" height="22" viewBox="0 0 22 22" fill="none" stroke={ink} strokeWidth="1.300" aria-hidden="true">
                <path d="M2 3l5 3 4-3 7 4M2 8l5-2 3 3 6-7M3 9c2 3 3 5 0 9h3M13 8l5 1" />
                <text x="6" y="19" fontSize="11" fontWeight="700" fill={ink} stroke="none">{text}</text>
            </svg>
        </button>
    );
}

function Bearing({ text }: { text: string }) {
    return (
        <button type="button" className="flex h-[31px] w-[31px] flex-col items-center justify-center text-[14px] leading-4 text-[#555]">
            {text}
            <svg width="20" height="5" viewBox="0 0 20 5" stroke={ink} aria-hidden="true">
                <path d="M2 3v2M6 3v2M10 0v5M14 3v2M18 3v2" />
            </svg>
        </button>
    );
}

export default function App() {
    return (
        <div className="flex h-screen flex-col overflow-hidden bg-[#efefef] font-['Open_Sans',sans-serif] text-[14px] leading-5 text-black">
            <header className="flex h-7 shrink-0 items-center bg-[#f2f2f2] text-[#8b8b8b]">
                <AppLogo className="h-5 w-[18px]" />
                <h1 className="ml-[7px] flex-1">Cartes du Ciel 4.3 5014-39250509 - Karte_1</h1>
                <button type="button" aria-label="Minimieren" className="flex h-7 w-[58px] items-center justify-center">
                    <svg width="13" height="12" viewBox="0 0 13 12" stroke="#8b8b8b"><path d="M0 5.500h13" /></svg>
                </button>
                <button type="button" aria-label="Verkleinern" className="flex h-7 w-[58px] items-center justify-center">
                    <svg width="12" height="12" viewBox="0 0 12 12" fill="none" stroke="#8b8b8b"><rect x=".5" y="2.500" width="9" height="9" rx="1.500" /><path d="M3 .5h6a2.500 2.500 0 0 1 2.500 2.500v6" /></svg>
                </button>
                <button type="button" aria-label="Beenden" className="flex h-7 w-[62px] items-center justify-center">
                    <svg width="13" height="13" viewBox="0 0 13 13" stroke="#8b8b8b"><path d="M.5.5l12 12M12.500.5l-12 12" /></svg>
                </button>
            </header>

            <nav className="flex h-6 shrink-0 items-center gap-4 bg-white px-1 pt-0.5" aria-label="Menü">
                {menus.map((menu) => (
                    <button key={menu} type="button">{menu}</button>
                ))}
                <span className="text-[#6d6d6d]">
                    Alt/Az Koord. TAN Mittelwerte des Datums Essen 2025-12-20 17h31m49s (CET) Mag.12.2 FOV:+07°29'50"
                </span>
            </nav>

            <div className="mt-[3px] flex h-[36px] shrink-0 items-center border-t border-b border-[#9a9f9a] pb-0.5">
                <div className="-ml-[3px] flex">
                    <ToolButton label="Kalender" icon={calendar} />
                    <ToolButton label="Kataloge" icon={books} />
                    <ToolButton label="Liste" icon={listBook} />
                    <ToolButton label="Suchen" icon={magnifier} />
                </div>
                <div className="mr-0.5 flex h-7 w-[300px] items-center rounded-sm border border-[#8a8a8a] bg-white pr-1">
                    <input aria-label="Suche" defaultValue="kap boo" className="min-w-0 flex-1 pl-1.5 outline-none" />
                    <button type="button" aria-label="Verlauf"><Chevron /></button>
                </div>
                <Separator />
                <ToolButton label="Jetzt" icon={clock} />
                <ToolButton label="Zeit zurück" icon={stepBack} />
                <ToolButton label="Zeit setzen" icon={clockBack} />
                <ToolButton label="Zeit vor" icon={stepForward} />
                <input aria-label="Schrittweite" defaultValue="1" className="ml-0.5 h-7 w-[38px] border-b border-[#8a8a8a] bg-white pl-0.5 outline-none" />
                <div className="mx-[3px] flex flex-col gap-0.5">
                    <button type="button" aria-label="Mehr" className="flex h-3 w-[14px] items-center justify-center rounded-sm border border-[#d0d0d0] bg-white">
                        <svg width="8" height="5" viewBox="0 0 8 5"><path d="M0 5l4-5 4 5z" /></svg>
                    </button>
                    <button type="button" aria-label="Weniger" className="flex h-3 w-[14px] items-center justify-center rounded-sm border border-[#d0d0d0] bg-white">
                        <svg width="8" height="5" viewBox="0 0 8 5"><path d="M0 0l4 5 4-5z" /></svg>
                    </button>
                </div>
                <div className="relative mr-px ml-1.5">
                    <select aria-label="Einheit" className="h-7 w-[119px] appearance-none rounded-sm border border-[#c8c8c8] bg-white pl-[3px]">
                        <option>Stunde</option>
                    </select>
                    <Chevron className="pointer-events-none absolute top-2 right-1" />
                </div>
                <Separator />
                <ToolButton label="Verkleinern" icon={zoomOut} />
                <ToolButton label="Vergrößern" icon={zoomIn} />
                <ToolButton label="Drehen" icon={rotateView} />
                <ToolButton label="Zentrieren" icon={target} on />
                <div className="w-0.5 shrink-0" />
                <Separator />
                {mapTools.map((tool) => (
                    <ToolButton key={tool.label} {...tool} />
                ))}
                <Separator />
                <div className="ml-auto">
                    <ToolButton label="Fenster" icon={windows} />
                </div>
            </div>

            <div className="flex h-[33px] shrink-0 items-center border-b border-[#9a9f9a]">
                <div className="-ml-[3px] flex">
                    <ToolButton label="Neue Karte" icon={note} />
                    {objectTools.map((tool) => (
                        <ToolButton key={tool.label} {...tool} on />
                    ))}
                </div>
            </div>

            <div className="flex min-h-0 flex-1 border-t border-white">
                <aside className="flex w-[31px] shrink-0 flex-col">
                    {sideTools.map((tool) => (
                        <button key={tool.label} type="button" aria-label={tool.label} className="flex h-[31px] w-6 shrink-0 items-center justify-center">
                            <Icon size={27}>{tool.icon}</Icon>
                        </button>
                    ))}
                    <button type="button" aria-label="Filter" className="flex h-6 w-6 items-center justify-center">
                        <Icon>{fewerMore}</Icon>
                    </button>
                    <button type="button" className="h-[30px] w-7 rounded-r-sm border border-l-0 border-[#99d1ff] bg-[#cce8ff] pr-1 text-base text-[#4a4a4a]">
                        α
                    </button>
                </aside>

                <main className="relative min-w-0 flex-1 bg-[#00001e]">
                    <div className="absolute inset-0 overflow-hidden">
                        <StarChart />
                        <div className="absolute top-0 left-0 h-[127px] w-[161px] bg-[#202020]/85 pt-[5px] pl-[5px] font-['Liberation_Sans',sans-serif] text-[13px] leading-4 whitespace-nowrap text-[#e8e8e8]">
                            <p>Alt/Az Koord. TAN</p>
                            <p>Mittelwerte des Datums</p>
                            <p>Essen</p>
                            <p>2025-12-20</p>
                            <p>17h31m49s</p>
                            <p>Mag.12.2</p>
                            <p>FOV:+07°29'50"</p>
                        </div>
                    </div>
                    <CatalogDialog />
                </main>

                <div className="flex w-[17px] shrink-0 justify-center pt-[314px]">
                    <div className="h-[22px] w-px bg-[#8a8a8a]" />
                </div>
                <aside className="flex w-[34px] shrink-0 flex-col items-center">
                    {fieldSizes.map((size) => (
                        <button key={size} type="button" className="h-[35px] shrink-0 font-semibold text-[#000080]">
                            {size}
                        </button>
                    ))}
                    <div className="my-px h-px w-7 shrink-0 bg-[#8a8a8a]" />
                    <div className="flex flex-col gap-[2px]">
                        <GridButton text="Eq" />
                        <GridButton text="Az" on />
                    </div>
                    <div className="my-0.5 h-px w-7 shrink-0 bg-[#8a8a8a]" />
                    <Bearing text="N" />
                    <Bearing text="S" />
                    <Bearing text="E" />
                    <Bearing text="W" />
                    <button type="button" className="flex h-[31px] w-[31px] items-center justify-center gap-1 text-[14px] text-[#555]">
                        <svg width="5" height="20" viewBox="0 0 5 20" stroke={ink} aria-hidden="true">
                            <path d="M0 2h2M0 6h2M0 10h5M0 14h2M0 18h2" />
                        </svg>
                        Z
                    </button>
                </aside>
            </div>

            <footer className="flex h-[50px] shrink-0 border-t border-white">
                <div className="-ml-0.5 w-[320px] shrink-0 pt-[17px] leading-5 whitespace-nowrap">
                    <p>Az:+326°19'25" Alt:+24°34'25" Luftmasse:2.4</p>
                    <p>RA: 14h44m14.0s DE:+52°50'03" LHA: &nbsp;8h14m</p>
                </div>
                <div className="mt-[17px] w-px bg-[#8a8a8a]" />
                <div className="mt-[8px] mr-[204px] ml-auto h-px w-[22px] bg-[#8a8a8a]" />
            </footer>
        </div>
    );
}
